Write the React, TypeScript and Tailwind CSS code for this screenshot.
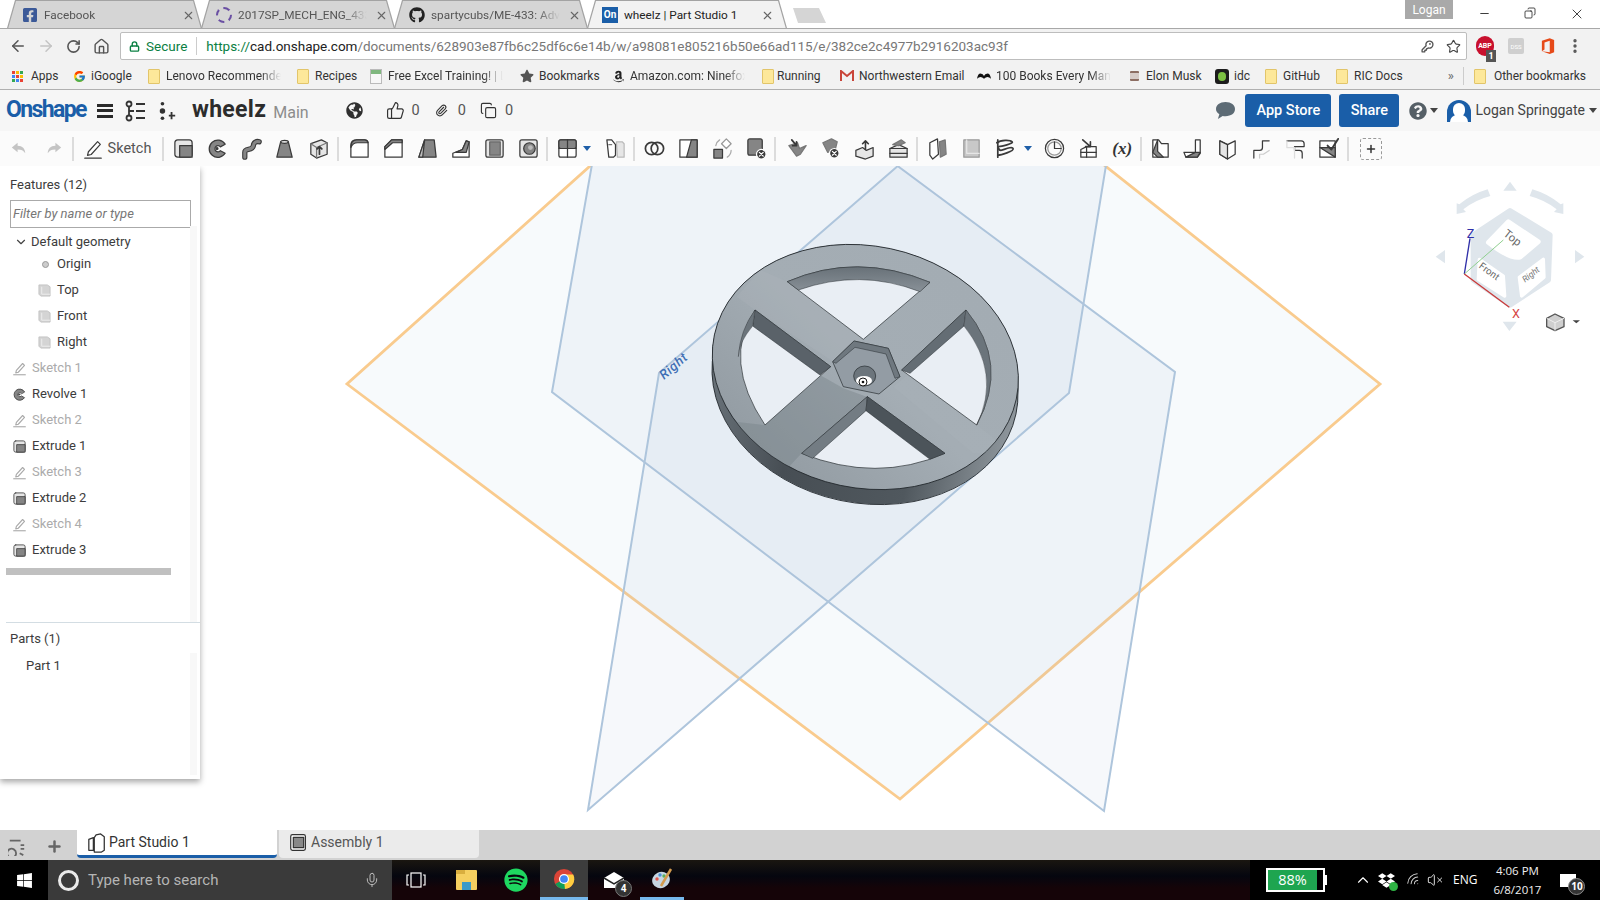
import type { ReactNode } from 'react';
import { ArrowLeft, ArrowRight, RotateCw, Home, Lock, Star, MoreVertical, Minus, X, Copy, ChevronDown, ChevronUp, Mic, ThumbsUp, Paperclip, Plus, Wifi, VolumeX, KeyRound } from 'lucide-react';
import { FaFacebookSquare, FaGithub, FaWindows, FaSpotify, FaGlobeAmericas, FaQuestionCircle, FaDropbox, FaStar, FaAmazon } from 'react-icons/fa';
import { FcGoogle } from 'react-icons/fc';

const chromeFont = "font-['Roboto','Liberation_Sans',sans-serif]";
const fade = '[mask-image:linear-gradient(to_right,black_82%,transparent)]';

const D = '#3a3a3a';
const G = '#858585';
const L = '#e6e6e6';

function Ico({ children, size = 24, className = '' }: { children: ReactNode; size?: number; className?: string }) {
    return (
        <svg viewBox="0 0 24 24" width={size} height={size} fill="none" stroke={D} strokeWidth={1.3} strokeLinejoin="round" strokeLinecap="round" className={className}>
            {children}
        </svg>
    );
}

// Onshape toolbar glyphs, drawn by eye from the reference
const glyphs: Record<string, ReactNode> = {
    undo: <path d="M10 6 4 11l6 5v-3c4 0 6 1 8 4 0-5-3-8-8-8z" fill="#c4c4c4" stroke="none" />,
    redo: <path d="M14 6l6 5-6 5v-3c-4 0-6 1-8 4 0-5 3-8 8-8z" fill="#c4c4c4" stroke="none" />,
    extrude: <><rect x="3" y="3" width="18" height="18" rx="3" fill={L} /><rect x="8" y="9" width="13" height="12" fill={G} /></>,
    revolve: <><path d="M20 7.5A9 9 0 1 0 20 17l-5-2.7a3.2 3.2 0 1 1 0-4z" fill={G} /><circle cx="11.5" cy="12" r="1" fill={D} /></>,
    sweep: <><path d="M5 21v-5c0-5 8-1 9-7 0-3 3-5 6-4" stroke={D} strokeWidth="5.5" /><path d="M5 21v-5c0-5 8-1 9-7 0-3 3-5 6-4" stroke={G} strokeWidth="3.2" /></>,
    loft: <><path d="M8 5 4 21h16L16 5z" fill={G} /><ellipse cx="12" cy="5" rx="4" ry="1.6" fill={L} /></>,
    thicken: <><path d="M4 7l11-4 6 3v12l-11 4-6-4z" fill={L} /><path d="M10 22V11l11-5M4 7l6 4" stroke="#777" /><path d="M13 18v-8m-2.500 2.500L13 10l2.500 2.500" strokeWidth="1.800" /></>,
    fillet: <><path d="M3 21V9q0-6 6-6h8q4 0 4 4v14z" fill="#fff" /><path d="M3 11q0-8 6-8h8q3 0 4 3H10q-5 0-7 5z" fill={G} /></>,
    chamfer: <><path d="M3 21V10l7-7h11v18z" fill="#fff" /><path d="M3 13v-3l7-7h11v3H11z" fill={G} /></>,
    draft: <><path d="M9 3h10l2 18H3z" fill={G} /><path d="M9 3 3 21h4z" fill="#bdbdbd" /></>,
    rib: <><path d="M4 21v-4l10-4 4-9 3 1v16z" fill="#fff" /><path d="M14 13l4-9 3 1-3 11H7z" fill={G} /></>,
    shell: <><rect x="3" y="3" width="18" height="18" rx="2" fill={L} /><rect x="7" y="5" width="11" height="14" fill={G} stroke="#666" /></>,
    hole: <><rect x="3" y="3" width="18" height="18" rx="2" fill={L} /><circle cx="13" cy="12" r="6" fill={G} /><circle cx="14" cy="11" r="2.500" fill="#bbb" stroke="none" /></>,
    pattern: <><rect x="3" y="3" width="18" height="18" rx="2" fill="#fff" /><rect x="3" y="3" width="18" height="9" rx="2" fill={G} /><path d="M12 3v18M3 12h18" /></>,
    mirror: <><path d="M13 5h6l2 2v14h-7z" fill={L} stroke="#bbb" /><path d="M3 3h5l4 5v11l-2 2H5z" fill="#fff" /><path d="M5 8h3" stroke="#777" /></>,
    boolean: <><circle cx="9" cy="12" r="6.500" strokeWidth="1.800" /><circle cx="15" cy="12" r="6.500" strokeWidth="1.800" /></>,
    split: <><path d="M3 3h18v18H3z" fill="#fff" /><path d="M15 3h6v18h-11z" fill={G} /></>,
    transform: <><rect x="3" y="13" width="9" height="9" fill={G} /><path d="M16 2l5 5-5 5-5-5z" fill="#fff" stroke="#999" /><path d="M5 9a9 9 0 0 1 4-6M21 14a9 9 0 0 1-4 7" stroke="#aaa" /></>,
    del: <><rect x="3" y="2" width="15" height="17" rx="2" fill={G} /><circle cx="17" cy="18" r="5" fill={D} stroke="#fff" /><path d="M15 16l4 4m0-4-4 4" stroke="#fff" /></>,
    mod1: <><path d="M3 9l8 11 4-2 6-9-7 3-2-6z" fill={G} stroke="#777" /><path d="M6 3l5 6m0 0V5m0 4H7" strokeWidth="1.800" /></>,
    mod2: <><path d="M4 6l9-4 6 3-2 8-8 3z" fill={G} stroke="#777" /><circle cx="16" cy="17" r="5" fill={D} stroke="#fff" /><path d="M14 15l4 4m0-4-4 4" stroke="#fff" /></>,
    mod3: <><path d="M3 14l7-3 4 3 7-3v9l-8 3-10-3z" fill={L} /><path d="M13 13V4m-3 3 3-3 3 3" strokeWidth="1.700" /></>,
    mod4: <><path d="M3 12l9-4 9 4v9H3z" fill={L} /><path d="M3 12h18M3 17h18" /><path d="M6 8l9-5 4 3-7 3z" fill={G} stroke="#777" /></>,
    plane1: <><path d="M4 6l8-4 1 16-6 5-3-4z" fill="#fff" /><path d="M14 5l6-2 1 15-6 3z" fill={G} stroke="#777" /></>,
    plane2: <><path d="M4 3h16v18H4z" fill="#c8c8c8" stroke="#999" /><path d="M7 3v14h13" stroke="#e6e6e6" /></>,
    helix: <><path d="M4 6c4-3 14-3 16-1S8 10 6 10s0 4 2 4 12-5 13-2-13 7-16 7" strokeWidth="1.800" /><path d="M5 3v18" strokeWidth="1.800" /></>,
    clock: <><circle cx="12" cy="12" r="9.500" /><circle cx="12" cy="12" r="7" stroke="#999" /><path d="M12 5v7h7" /></>,
    importer: <><path d="M4 13l6-3h10v11H4z" fill="#fff" /><path d="M10 10v11M4 16h16" /><path d="M6 3l8 7m0-5v5H9" strokeWidth="1.700" /></>,
    sm1: <><path d="M4 3h6l3 4h7v14H4z" fill="#fff" /><path d="M9 3v12l6 6H9l-5-5z" fill={G} /></>,
    sm2: <><path d="M14 3h5v14l-3 4H4l-2-5h12z" fill="#fff" /><path d="M14 16h5l-3 5H4z" fill={G} /></>,
    sm3: <><path d="M4 4l8 4 8-4v14l-8 5-8-5z" fill="#fff" /><path d="M12 8v15l-8-5V4z" fill={L} /></>,
    sm4: <><path d="M4 22v-8h6q3 0 3-3V4h7" /><path d="M10 22v-4h4l6-4" stroke="#ccc" /></>,
    sm5: <><path d="M3 4h15q3 0 3 3v3H11v4h5q3 0 3 3v5" /><path d="M3 4v7h8v11" stroke="#ddd" /></>,
    sm6: <><rect x="3" y="4" width="16" height="17" fill="#fff" /><path d="M3 11l16 10V11z" fill={G} /><path d="M11 9l4 4 7-11" strokeWidth="2" /></>,
};

const pencil = (
    <>
        <path d="M7 15 17 4l3 3L10 18l-4 1z" fill="#fff" />
        <path d="M3 22h18" />
    </>
);

function ToolIcon({ name, grey }: { name: string; grey?: boolean }) {
    return (
        <div className={'flex h-8 w-[33.8px] shrink-0 items-center justify-center ' + (grey ? 'opacity-70' : '')}>
            <Ico size={23}>{glyphs[name]}</Ico>
        </div>
    );
}

function Sep() {
    return <div className="mx-[1px] h-6 w-[2px] shrink-0 bg-[#dcdcdc]" />;
}

function Caret({ className = 'border-t-[#1f5fa8]' }: { className?: string }) {
    return <div className={'h-0 w-0 shrink-0 border-x-[4px] border-t-[5px] border-x-transparent ' + className} />;
}

function Folder() {
    return <div className="h-[15px] w-[12px] shrink-0 rounded-[1px] border border-[#e2c56a] bg-[#fde89a]" />;
}

function BrowserTab({ icon, label, active, width }: { icon: ReactNode; label: string; active?: boolean; width: string }) {
    return (
        <div className={'-mr-[1px] h-[28px] shrink-0 bg-[#a3a3a3] [clip-path:polygon(0_100%,8px_0,calc(100%-8px)_0,100%_100%)] ' + width}>
            <div className={'mx-[1px] mt-[1px] flex h-[28px] items-center pl-[14px] [clip-path:polygon(0_100%,8px_0,calc(100%-8px)_0,100%_100%)] ' + (active ? 'bg-[#f2f2f2] pr-[12px]' : 'bg-[#d5d5d5] pr-[6px]')}>
                <div className="flex w-[22px] shrink-0 items-center">{icon}</div>
                <span className={'min-w-0 flex-1 overflow-hidden whitespace-nowrap text-[11.800px] leading-[16px] ' + (active ? 'text-[#222]' : 'text-[#555] ' + fade)}>{label}</span>
                <X size={13} strokeWidth={2} className="ml-2 shrink-0 text-[#666]" />
            </div>
        </div>
    );
}

const bookmarks: { icon: ReactNode; label: string; w: string; faded?: boolean; gap?: string }[] = [
    { icon: <div className="grid h-[11px] w-[11px] grid-cols-3 gap-[1px]"><i className="bg-[#ea4335]" /><i className="bg-[#fbbc05]" /><i className="bg-[#34a853]" /><i className="bg-[#4285f4]" /><i className="bg-[#ea4335]" /><i className="bg-[#fbbc05]" /><i className="bg-[#34a853]" /><i className="bg-[#4285f4]" /><i className="bg-[#ea4335]" /></div>, label: 'Apps', w: 'w-[62px]', gap: 'ml-[7px]' },
    { icon: <FcGoogle size={13} />, label: 'iGoogle', w: 'w-[75px]' },
    { icon: <Folder />, label: 'Lenovo Recommended', w: 'w-[149px]', faded: true },
    { icon: <Folder />, label: 'Recipes', w: 'w-[73px]' },
    { icon: <div className="h-[15px] w-[12px] border border-[#bbb] bg-[#f7f7f7]"><div className="h-[4px] bg-[#7fb77e]" /></div>, label: 'Free Excel Training! | Learn', w: 'w-[151px]', faded: true },
    { icon: <FaStar size={14} className="text-[#555]" />, label: 'Bookmarks', w: 'w-[91px]' },
    { icon: <FaAmazon size={13} className="text-[#222]" />, label: 'Amazon.com: Ninefox', w: 'w-[150px]', faded: true },
    { icon: <Folder />, label: 'Running', w: 'w-[79px]', gap: 'ml-[2px]' },
    { icon: <svg viewBox="0 0 14 12" width="14" height="12"><path d="M1 11V1l6 5 6-5v10" fill="none" stroke="#c9453a" strokeWidth="2" /></svg>, label: 'Northwestern Email', w: 'w-[137px]' },
    { icon: <svg viewBox="0 0 16 8" width="15" height="8"><path d="M0 7Q1 1 4 1t4 3q1-3 4-3t4 6q-2-2-4-2T8 7Q6 5 4 5T0 7z" fill="#111" /></svg>, label: '100 Books Every Man', w: 'w-[150px]', faded: true },
    { icon: <div className="h-[10px] w-[9px] rounded-[1px] border-y-2 border-[#8d6e63] bg-[#d7ccc8]" />, label: 'Elon Musk', w: 'w-[88px]' },
    { icon: <div className="flex h-[15px] w-[14px] items-center justify-center rounded-[3px] bg-[#1c1c1c]"><div className="h-[9px] w-[8px] rounded-full bg-[#7cc142]" /></div>, label: 'idc', w: 'w-[49px]' },
    { icon: <Folder />, label: 'GitHub', w: 'w-[71px]' },
    { icon: <Folder />, label: 'RIC Docs', w: 'w-[93px]' },
];

const toolbarGroups = [
    { cls: 'ml-[2px]', items: ['extrude', 'revolve', 'sweep', 'loft', 'thicken'] },
    { cls: 'ml-[3px]', items: ['fillet', 'chamfer', 'draft', 'rib', 'shell', 'hole'] },
];

function Toolbar() {
    return (
        <div className="flex h-[35px] shrink-0 items-center bg-[#fbfbfb] pl-[3px]">
            <ToolIcon name="undo" />
            <ToolIcon name="redo" />
            <Sep />
            <div className="flex w-[86px] shrink-0 items-center pl-[7px]">
                <Ico size={22}>{pencil}</Ico>
                <span className="ml-[4px] font-['Roboto',sans-serif] text-[14.500px] text-[#555]">Sketch</span>
            </div>
            <Sep />
            {toolbarGroups.map((g, i) => (
                <div key={i} className={'flex shrink-0 items-center ' + g.cls}>
                    {g.items.map((n) => <ToolIcon key={n} name={n} />)}
                    <Sep />
                </div>
            ))}
            <div className="ml-[1px] flex shrink-0 items-center">
                <ToolIcon name="pattern" />
                <div className="-ml-[1px] mr-[6px] w-[9px]"><Caret /></div>
                <ToolIcon name="mirror" />
                <Sep />
            </div>
            <div className="ml-[2px] flex shrink-0 items-center">
                {['boolean', 'split', 'transform', 'del'].map((n) => <ToolIcon key={n} name={n} />)}
                <Sep />
            </div>
            <div className="ml-[3px] flex shrink-0 items-center">
                {['mod1', 'mod2', 'mod3', 'mod4'].map((n) => <ToolIcon key={n} name={n} />)}
                <Sep />
            </div>
            <div className="ml-[1px] flex shrink-0 items-center">
                <ToolIcon name="plane1" />
                <ToolIcon name="plane2" />
                <ToolIcon name="helix" />
                <div className="ml-[2px] mr-[5px] w-[9px]"><Caret /></div>
                <ToolIcon name="clock" />
                <ToolIcon name="importer" />
                <div className="flex w-[33.800px] shrink-0 justify-center font-['Liberation_Serif',serif] text-[17px] font-bold italic text-[#333]">(x)</div>
                <Sep />
            </div>
            <div className="flex shrink-0 items-center">
                {['sm1', 'sm2', 'sm3', 'sm4', 'sm5', 'sm6'].map((n) => <ToolIcon key={n} name={n} />)}
                <Sep />
            </div>
            <div className="relative ml-[10px] flex h-[22px] w-[22px] items-center justify-center rounded-[3px] border border-dashed border-[#999]">
                <Plus size={12} strokeWidth={3} className="text-[#333]" />
            </div>
        </div>
    );
}

function Wheel() {
    const hull = Array.from({ length: 23 }, (_, i) => i * 2);
    return (
        <g transform="translate(680 220) scale(0.33333)">
            {hull.map((d) => (
                <ellipse key={d} cx={556 - d * 0.02} cy={441 + d} rx="463" ry="363" transform={`rotate(12 ${556 - d * 0.02} ${441 + d})`} fill="url(#wheelSide)" />
            ))}
            <ellipse cx="555" cy="486" rx="463" ry="363" transform="rotate(12 555 486)" fill="none" stroke="#23282c" strokeWidth="2.500" />
            <ellipse cx="556" cy="441" rx="463" ry="363" transform="rotate(12 556 441)" fill="url(#wheelTop)" stroke="#23282c" strokeWidth="2.500" />
            <g clipPath="url(#wheelClip)">
                <path d="M255 615 420 465 490 505 560 530 365 700 270 800 120 600z" fill="#6f7a82" opacity="0.35" />
                <path d="M690 460 890 615 1000 700 880 700 640 500z" fill="#b1bac0" opacity="0.2" />
                <path d="M322 185 550 358 460 425 225 270 170 230 240 150z" fill="#b5bdc3" opacity="0.18" />
            </g>

            {/* top opening */}
            <path d="M322 185Q530 95 750 187L550 358z" fill="#e9eef4" stroke="#23282c" strokeWidth="2" />
            <path d="M322 185Q530 95 750 187L720 215Q540 145 355 210z" fill="url(#wallTop)" stroke="#23282c" strokeWidth="1.500" />
            {/* right opening */}
            <path d="M858 270Q990 430 890 615L665 450z" fill="#e9eef4" stroke="#23282c" strokeWidth="2" />
            <path d="M858 270 665 450 690 460 852 318z" fill="#646d74" stroke="#23282c" strokeWidth="1.500" />
            <path d="M858 270Q990 430 890 615Q965 460 852 318z" fill="#6b747b" stroke="#23282c" strokeWidth="1" />
            {/* bottom opening */}
            <path d="M562 530 365 700Q590 790 795 700z" fill="#e9eef4" stroke="#23282c" strokeWidth="2" />
            <path d="M562 530 365 700 398 715 558 572z" fill="#737c83" stroke="#23282c" strokeWidth="1.500" />
            <path d="M562 530 795 700 750 718 558 572z" fill="#4c545a" stroke="#23282c" strokeWidth="1.500" />
            {/* left opening */}
            <path d="M225 270Q125 420 255 615L452 440z" fill="#e9eef4" stroke="#23282c" strokeWidth="2" />
            <path d="M225 270 452 440 420 465 218 318z" fill="#5a6269" stroke="#23282c" strokeWidth="1.500" />
            <path d="M225 270 218 318Q175 370 175 410Q180 330 225 270z" fill="#6b747b" stroke="#23282c" strokeWidth="1" />

            {/* hex pocket */}
            <path d="M522 363 625 385 660 470 597 522 490 500 458 425z" fill="#939ca4" stroke="#23282c" strokeWidth="2" />
            <path d="M522 363 625 385 660 470 645 475 618 402 525 382 468 430 458 425z" fill="#6f787f" stroke="#23282c" strokeWidth="1.500" />
            <ellipse cx="554" cy="468" rx="33" ry="30" fill="#6c757c" stroke="#23282c" strokeWidth="2" />
            <ellipse cx="552" cy="482" rx="24" ry="14" fill="#ffffff" />
            <circle cx="549" cy="486" r="12" fill="#fff" stroke="#111" strokeWidth="3" />
            <circle cx="549" cy="486" r="4" fill="#111" />
        </g>
    );
}

function Viewport() {
    return (
        <svg viewBox="0 166 1600 664" className="block h-full w-full">
            <defs>
                <linearGradient id="wheelSide" x1="0" y1="0" x2="1" y2="0">
                    <stop offset="0" stopColor="#6a737a" />
                    <stop offset="0.3" stopColor="#474e54" />
                    <stop offset="0.7" stopColor="#50585e" />
                    <stop offset="1" stopColor="#8e969c" />
                </linearGradient>
                <linearGradient id="wheelTop" x1="0.8" y1="0.1" x2="0.2" y2="0.9">
                    <stop offset="0" stopColor="#a3acb3" />
                    <stop offset="0.5" stopColor="#a4adb4" />
                    <stop offset="1" stopColor="#949da4" />
                </linearGradient>
                <linearGradient id="wallTop" x1="0" y1="0" x2="0" y2="1">
                    <stop offset="0" stopColor="#687178" />
                    <stop offset="1" stopColor="#899198" />
                </linearGradient>
                <clipPath id="wheelClip">
                    <ellipse cx="556" cy="441" rx="463" ry="363" transform="rotate(12 556 441)" />
                </clipPath>
            </defs>
            <polygon points="832,-51 347,384 900,799 1380,384" fill="#a9c3dd" fillOpacity="0.09" stroke="#f9cb8e" strokeWidth="2.800" />
            <polygon points="627,-35 552,392 1104,811 1175,372" fill="#a9bfd8" fillOpacity="0.11" stroke="#aec5dc" strokeWidth="2" />
            <polygon points="1140,-44 659,373 588,810 1069,393" fill="#a9bfd8" fillOpacity="0.11" stroke="#aec5dc" strokeWidth="2" />
            <text x="664" y="380" transform="rotate(-41 664 380)" fontFamily="Roboto, sans-serif" fontStyle="italic" fontSize="13" fontWeight="500" letterSpacing="0.6" fill="#3f6fb5">Right</text>
            <Wheel />
        </svg>
    );
}

function ViewCube() {
    const arrow = '#dfe6ec';
    return (
        <svg viewBox="0 0 540 540" width="180" height="180">
            <path d="M270 35 250 62h40zM47 260l28-20v40zM493 260l-28-20v40zM268 483l-20-28h42z" fill={arrow} />
            <path d="M110 132V100l8 3Q155 72 203 58l8 20Q165 90 130 118l8 8z" fill={arrow} />
            <path d="M430 132V100l-8 3Q385 72 337 58l-8 20Q375 90 410 118l-8 8z" fill={arrow} />
            <path d="M270 122 390 195l-5 135-115 75-110-75v-135z" fill={arrow} stroke={arrow} strokeWidth="16" strokeLinejoin="round" />
            <path d="M265 155 355 215 300 262Q270 268 205 217z" fill="#fff" stroke="#fff" strokeWidth="14" strokeLinejoin="round" />
            <path d="M178 268 250 318 254 378 175 328z" fill="#fff" stroke="#fff" strokeWidth="10" strokeLinejoin="round" />
            <path d="M370 268 372 322 305 378 298 322z" fill="#fff" stroke="#fff" strokeWidth="10" strokeLinejoin="round" />
            <text x="248" y="195" transform="rotate(38 248 195)" fontFamily="Roboto, sans-serif" fontSize="34" fill="#666">Top</text>
            <text x="175" y="292" transform="rotate(36 175 292)" fontFamily="Roboto, sans-serif" fontSize="29" fill="#666">Front</text>
            <text x="315" y="338" transform="rotate(-38 315 338)" fontFamily="Roboto, sans-serif" fontStyle="italic" fontSize="26" fill="#777">Right</text>
            <path d="M133 312 150 205" stroke="#2f2fa8" strokeWidth="4" />
            <path d="M133 312 250 210" stroke="#8fcf8f" strokeWidth="3" />
            <path d="M133 312 268 412" stroke="#c93a3a" strokeWidth="4" />
            <text x="140" y="205" fontFamily="Roboto, sans-serif" fontSize="38" fill="#2f2fa8">Z</text>
            <text x="276" y="445" fontFamily="Roboto, sans-serif" fontSize="38" fill="#d64545">X</text>
            <path d="M380 445 405 432 432 445V470L405 482 380 470z" fill="#cfcfcf" stroke="#555" strokeWidth="4" strokeLinejoin="round" />
            <path d="M380 445 405 458 432 445M405 458V482" fill="none" stroke="#eee" strokeWidth="3" />
            <path d="M458 451H480L469 460z" fill="#444" />
        </svg>
    );
}

const planeIcon = (
    <svg viewBox="0 0 14 14" width="13" height="13"><path d="M1 1h9l3 2v10H3l-2-2z" fill="#d4d4d4" stroke="#c2c2c2" /><path d="M4 3v8h9" fill="none" stroke="#eee" /></svg>
);

function FeatureRow({ icon, label, sketch }: { icon: ReactNode; label: string; sketch?: boolean }) {
    return (
        <div className="flex h-[26px] items-center pl-[12px]">
            <div className="flex w-[20px] shrink-0 items-center">{icon}</div>
            <span className={'text-[13px] ' + (sketch ? 'text-[#ababab]' : 'text-[#3c3c3c]')}>{label}</span>
        </div>
    );
}

function GeoRow({ icon, label }: { icon: ReactNode; label: string }) {
    return (
        <div className="flex h-[26px] items-center pl-[38px]">
            <div className="flex w-[19px] shrink-0 items-center">{icon}</div>
            <span className="text-[13px] text-[#3c3c3c]">{label}</span>
        </div>
    );
}

const sketchIcon = (
    <svg viewBox="0 0 24 24" width="15" height="15" fill="none" stroke="#aaa" strokeWidth="1.800" strokeLinejoin="round"><path d="M7 15 17 4l3 3L10 18l-4 1z" /><path d="M2 22h20" /></svg>
);
const extrudeIcon = <Ico size={15}>{glyphs.extrude}</Ico>;
const revolveIcon = <Ico size={15}>{glyphs.revolve}</Ico>;

function FeaturePanel() {
    return (
        <div className="absolute left-0 top-0 flex h-[613px] w-[200px] flex-col bg-white font-['Roboto',sans-serif] shadow-[0_3px_6px_rgba(0,0,0,0.35)]">
            <div className="relative h-[456px] shrink-0 pl-[10px] pt-[9px]">
                <div className="text-[13px] leading-[20px] text-[#3c3c3c]">Features (12)</div>
                <div className="mt-[5px] flex h-[28px] w-[181px] items-center border border-[#aaa] pl-[2px] text-[13px] italic text-[#777]">Filter by name or type</div>
                <div className="absolute right-[3px] top-[60px] bottom-0 w-[7px] bg-[#f8f8f8]" />
                <div className="relative -ml-[10px] mt-[1px]">
                    <div className="flex h-[26px] items-center pl-[14px]">
                        <ChevronDown size={14} strokeWidth={2} className="mr-[2px] text-[#444]" />
                        <span className="ml-[1px] text-[13px] text-[#3c3c3c]">Default geometry</span>
                    </div>
                    <div className="-mt-[2px] mb-[2px] flex h-[22px] items-center pl-[42px]">
                        <div className="mr-[10px] h-[7px] w-[7px] rounded-full border border-[#999] bg-[#ccc]" />
                        <span className="ml-[-2px] text-[13px] text-[#3c3c3c]">Origin</span>
                    </div>
                    <GeoRow icon={planeIcon} label="Top" />
                    <GeoRow icon={planeIcon} label="Front" />
                    <GeoRow icon={planeIcon} label="Right" />
                    <FeatureRow icon={sketchIcon} label="Sketch 1" sketch />
                    <FeatureRow icon={revolveIcon} label="Revolve 1" />
                    <FeatureRow icon={sketchIcon} label="Sketch 2" sketch />
                    <FeatureRow icon={extrudeIcon} label="Extrude 1" />
                    <FeatureRow icon={sketchIcon} label="Sketch 3" sketch />
                    <FeatureRow icon={extrudeIcon} label="Extrude 2" />
                    <FeatureRow icon={sketchIcon} label="Sketch 4" sketch />
                    <FeatureRow icon={extrudeIcon} label="Extrude 3" />
                    <div className="ml-[6px] mt-[5px] h-[7px] w-[165px] bg-[#c0c0c0]" />
                </div>
            </div>
            <div className="ml-[6px] h-px shrink-0 bg-[#d3dde3]" />
            <div className="relative flex-1 pl-[10px] pt-[6px]">
                <div className="absolute right-[3px] top-[30px] bottom-[4px] w-[7px] bg-[#f8f8f8]" />
                <div className="text-[13px] leading-[20px] text-[#3c3c3c]">Parts (1)</div>
                <div className="mt-[7px] pl-[16px] text-[13px] leading-[20px] text-[#3c3c3c]">Part 1</div>
            </div>
        </div>
    );
}

function ChromeLogo() {
    return (
        <svg viewBox="0 0 24 24" width="22" height="22">
            <circle cx="12" cy="12" r="11" fill="#db4437" />
            <path d="M12 12 2.500 17.500A11 11 0 0 0 15 22.600z" fill="#0f9d58" />
            <path d="M12 7h10a11 11 0 0 1-9 16l-1-11z" fill="#ffcd40" />
            <circle cx="12" cy="12" r="5.500" fill="#fff" />
            <circle cx="12" cy="12" r="4.200" fill="#4285f4" />
        </svg>
    );
}

export default function App() {
    return (
        <div className={'flex h-[900px] w-[1600px] flex-col overflow-hidden bg-white ' + chromeFont}>
            {/* chrome tab strip */}
            <div className="relative flex h-[29px] shrink-0 items-start border-b border-[#a8a8a8] bg-white pl-[7px]">
                <BrowserTab width="w-[195px]" label="Facebook" icon={<FaFacebookSquare size={16} className="text-[#3b5998]" />} />
                <BrowserTab width="w-[194px]" label="2017SP_MECH_ENG_433-0_SEC20" icon={<div className="h-[16px] w-[16px] rounded-full border-[2px] border-dashed border-[#6a4fa3]" />} />
                <BrowserTab width="w-[194px]" label="spartycubs/ME-433: Advanced" icon={<FaGithub size={16} className="text-[#222]" />} />
                <BrowserTab active width="w-[200px]" label="wheelz | Part Studio 1" icon={<div className="flex h-[16px] w-[16px] items-center justify-center bg-[#1a5ea8] text-[10px] font-bold leading-none text-white">On</div>} />
                <div className="ml-[7px] mt-[8px] h-[15px] w-[33px] bg-[#d5d5d5] [clip-path:polygon(5px_100%,0_0,calc(100%-7px)_0,100%_100%)]" />
                <div className="ml-auto flex items-start">
                    <div className="mr-[8px] flex h-[19px] w-[48px] items-center justify-center bg-[#a9a9a9] text-[12px] text-white">Logan</div>
                    <div className="flex w-[46px] justify-center pt-[7px]"><Minus size={13} strokeWidth={1.500} className="text-[#111]" /></div>
                    <div className="flex w-[46px] justify-center pt-[7px]"><Copy size={12} strokeWidth={1.500} className="-scale-x-100 text-[#111]" /></div>
                    <div className="flex w-[47px] justify-center pt-[6px]"><X size={16} strokeWidth={1.200} className="text-[#111]" /></div>
                </div>
            </div>

            {/* address bar */}
            <div className="flex h-[34px] shrink-0 items-center bg-[#f2f2f2] pl-[9px]">
                <ArrowLeft size={18} strokeWidth={2} className="text-[#555]" />
                <ArrowRight size={18} strokeWidth={2} className="ml-[10px] text-[#c4c4c4]" />
                <RotateCw size={15} strokeWidth={2.500} className="ml-[11px] text-[#555]" />
                <Home size={17} strokeWidth={2} className="ml-[12px] text-[#555]" />
                <div className="ml-[10px] flex h-[28px] w-[1347px] shrink-0 items-center rounded-[2px] border border-[#bdbdbd] bg-white pl-[8px] pr-[3px]">
                    <Lock size={11} strokeWidth={3} className="text-[#0b8043]" />
                    <span className="ml-[6px] text-[13.500px] text-[#0b8043]">Secure</span>
                    <div className="ml-[9px] h-[18px] w-px bg-[#ccc]" />
                    <div className="ml-[9px] text-[13.500px] text-[#777]"><span className="text-[#0b8043]">https://</span><span className="text-[#222]">cad.onshape.com</span>/documents/628903e87fb6c25df6c6e14b/w/a98081e805216b50e66ad115/e/382ce2c4977b2916203ac93f</div>
                    <KeyRound size={13} strokeWidth={2.500} className="ml-auto mr-[12px] text-[#555]" />
                    <Star size={15} strokeWidth={1.800} className="mr-[2px] text-[#444]" />
                </div>
                <div className="relative ml-[9px] h-[20px] w-[18px] rounded-full bg-[#c8102e] text-center text-[7px] font-bold leading-[20px] text-white">
                    ABP
                    <div className="absolute -bottom-[6px] left-[10px] h-[12px] w-[10px] bg-[#555] text-[9px] leading-[12px]">1</div>
                </div>
                <div className="ml-[14px] flex h-[16px] w-[16px] items-center justify-center rounded-[2px] bg-[#cfcfcf] text-[6px] text-white">DSS</div>
                <svg viewBox="0 0 16 20" width="14" height="20" className="ml-[17px]"><path d="M1 4 10 1l5 2v14l-5 2-9-3 9 1V4L4 6v8l-3 2z" fill="#e64a19" /></svg>
                <MoreVertical size={18} strokeWidth={2.500} className="ml-[11px] text-[#555]" />
            </div>

            {/* bookmarks */}
            <div className="flex h-[27px] shrink-0 items-center border-b border-[#b0b0b0] bg-[#f2f2f2] pl-[10px] text-[12px] text-[#333]">
                {bookmarks.map((b) => (
                    <div key={b.label} className={'flex shrink-0 items-center overflow-hidden ' + b.w}>
                        <div className="flex w-[14px] shrink-0 justify-center">{b.icon}</div>
                        <span className={(b.gap ?? 'ml-[5px]') + ' whitespace-nowrap ' + (b.faded ? 'max-w-[115px] overflow-hidden ' + fade : '')}>{b.label}</span>
                    </div>
                ))}
                <div className="ml-auto flex items-center pr-[14px]">
                    <span className="mr-[9px] text-[13px] text-[#666]">»</span>
                    <div className="mr-[10px] h-[18px] w-px bg-[#ccc]" />
                    <Folder />
                    <span className="ml-[8px]">Other bookmarks</span>
                </div>
            </div>

            {/* onshape header */}
            <div className="flex h-[41px] shrink-0 items-center bg-[#f6f6f6] pl-[6px] font-['Roboto',sans-serif]">
                <span className="w-[79px] text-[23px] font-bold tracking-[-1.600px] text-[#1a5ea8]">Onshape</span>
                <div className="ml-[12px] flex h-[14px] w-[16px] flex-col justify-between"><i className="h-[3px] bg-[#2a2a2a]" /><i className="h-[3px] bg-[#2a2a2a]" /><i className="h-[3px] bg-[#2a2a2a]" /></div>
                <svg viewBox="0 0 22 22" width="22" height="22" fill="none" stroke="#333" strokeWidth="1.800" className="ml-[11px]"><circle cx="5" cy="4" r="2.500" /><circle cx="5" cy="18" r="2.500" /><path d="M5 7v8M5 11h5M12 4h9M12 11h9M12 18h9" /></svg>
                <svg viewBox="0 0 22 22" width="20" height="22" fill="#333" className="ml-[11px]"><circle cx="6" cy="3" r="2" /><circle cx="6" cy="11" r="3" /><circle cx="6" cy="19" r="2" /><path d="M13 15h2v-3h2v3h3v2h-3v3h-2v-3h-2z" /></svg>
                <span className="ml-[15px] text-[23px] font-bold tracking-[0.3px] text-[#2c2c2c]">wheelz</span>
                <span className="ml-[7px] mt-[4px] text-[16px] text-[#8c8c8c]">Main</span>
                <FaGlobeAmericas size={17} className="ml-[37px] text-[#2f2f2f]" />
                <ThumbsUp size={19} strokeWidth={1.500} className="ml-[23px] text-[#333]" />
                <span className="ml-[7px] text-[14.500px] text-[#555]">0</span>
                <Paperclip size={13} strokeWidth={2} className="ml-[15px] text-[#333]" />
                <span className="ml-[10px] text-[14.500px] text-[#555]">0</span>
                <Copy size={17} strokeWidth={1.600} className="ml-[14px] text-[#333]" />
                <span className="ml-[8px] text-[14.500px] text-[#555]">0</span>
                <div className="ml-auto flex items-center">
                    <svg viewBox="0 0 22 20" width="21" height="19"><path d="M11 1c6 0 10 3 10 7.500S17 16 11 16c-1 0-2 0-3-.3L3 19l1.500-5C2 12.500 1 10.500 1 8.500 1 4 5 1 11 1z" fill="#5d6b75" /></svg>
                    <div className="ml-[9px] flex h-[33px] w-[86px] items-center justify-center rounded-[3px] bg-[#1a5ea8] text-[14.500px] font-medium text-white">App Store</div>
                    <div className="ml-[8px] flex h-[33px] w-[60px] items-center justify-center rounded-[3px] bg-[#1a5ea8] text-[14.500px] font-medium text-white">Share</div>
                    <FaQuestionCircle size={18} className="ml-[10px] text-[#555f66]" />
                    <div className="ml-[3px]"><Caret className="border-t-[#444]" /></div>
                    <div className="relative ml-[9px] h-[22px] w-[24px] overflow-hidden rounded-t-full bg-[#1a5ea8]">
                        <div className="absolute left-[6px] top-[3px] h-[14px] w-[12px] rounded-full bg-white" />
                        <div className="absolute bottom-0 left-[3px] h-[7px] w-[18px] rounded-t-full bg-white" />
                    </div>
                    <span className="ml-[4px] text-[14px] text-[#444]">Logan Springgate</span>
                    <div className="ml-[4px] mr-[3px]"><Caret className="border-t-[#444]" /></div>
                </div>
            </div>

            <Toolbar />

            {/* graphics area */}
            <div className="relative flex-1 overflow-hidden bg-white">
                <Viewport />
                <FeaturePanel />
                <div className="absolute right-0 top-[4px]">
                    <ViewCube />
                </div>
            </div>

            {/* part studio tabs */}
            <div className="flex h-[30px] shrink-0 items-start bg-[#d2d2d2] font-['Roboto',sans-serif]">
                <svg viewBox="0 0 20 20" width="18" height="18" fill="none" stroke="#666" strokeWidth="2" className="ml-[8px] mt-[8px]"><path d="M2 3h12M9 17a5 5 0 1 1 0-.1M13 17l4 2M14 8h4M14 12h4" /></svg>
                <Plus size={17} strokeWidth={3.500} className="ml-[20px] mt-[8px] text-[#666]" />
                <div className="ml-[14px] flex h-[28px] w-[200px] items-center rounded-b-[4px] border-b-[3px] border-[#1a5ea8] bg-white pl-[10px]">
                    <svg viewBox="0 0 22 22" width="20" height="20" fill="#fff" stroke="#333" strokeWidth="1.400" strokeLinejoin="round"><path d="M2 7l5-2v14H2zM8 5l2-3 5-1 4 3v15l-3 2H8z" /></svg>
                    <span className="ml-[2px] text-[14px] text-[#333]">Part Studio 1</span>
                </div>
                <div className="ml-[2px] flex h-[28px] w-[200px] items-center rounded-b-[4px] bg-[#ebebeb] pb-[3px] pl-[10px]">
                    <svg viewBox="0 0 22 22" width="19" height="19" fill="#fff" stroke="#333" strokeWidth="1.400" strokeLinejoin="round"><rect x="2" y="2" width="17" height="18" rx="2" /><rect x="5" y="5" width="12" height="12" fill="#888" /></svg>
                    <span className="ml-[3px] text-[14px] text-[#555]">Assembly 1</span>
                </div>
            </div>

            {/* windows taskbar */}
            <div className="flex h-[40px] shrink-0 items-stretch bg-black text-white">
                <div className="flex w-[48px] shrink-0 items-center justify-center"><FaWindows size={17} /></div>
                <div className="flex w-[344px] shrink-0 items-center bg-[#3a3a3a] pl-[10px]">
                    <div className="h-[21px] w-[21px] rounded-full border-[3px] border-[#eaeaea]" />
                    <span className="ml-[9px] text-[15px] text-[#b5b5b5]">Type here to search</span>
                    <Mic size={16} strokeWidth={1.500} className="ml-auto mr-[12px] text-[#bbb]" />
                </div>
                <div className="flex flex-1 items-stretch bg-[linear-gradient(to_bottom,#1a1610_0%,#05060f_40%,#150408_70%,#150408_100%)]">
                    <div className="flex w-[48px] items-center justify-center"><svg viewBox="0 0 20 16" width="20" height="16" fill="none" stroke="#fff" strokeWidth="1.200"><rect x="5" y="1" width="10" height="14" /><path d="M3 3H1v10h2M17 3h2v10h-2" /></svg></div>
                    <div className="flex w-[52px] items-center justify-center">
                        <div className="relative h-[20px] w-[21px] rounded-[1px] bg-[#f5cf60]"><div className="absolute bottom-0 left-[6px] h-[8px] w-[9px] bg-[#3b9ac9]" /><div className="absolute left-0 top-0 h-[4px] w-[9px] bg-[#d9ae3f]" /></div>
                    </div>
                    <div className="flex w-[48px] items-center justify-center"><FaSpotify size={24} className="text-[#1ed760]" /></div>
                    <div className="flex w-[48px] items-center justify-center border-b-[3px] border-[#76b9ed] bg-[#3d3d3d]"><ChromeLogo /></div>
                    <div className="relative flex w-[52px] items-center justify-center">
                        <svg viewBox="0 0 22 18" width="22" height="18"><path d="M1 7 11 1l10 6v10H1z" fill="#fff" /><path d="M1 7l10 6 10-6" fill="none" stroke="#222" strokeWidth="1.500" /></svg>
                        <div className="absolute bottom-[3px] right-[8px] flex h-[17px] w-[17px] items-center justify-center rounded-full border border-[#777] bg-[#333] text-[10px] font-bold">4</div>
                    </div>
                    <div className="flex w-[44px] items-center justify-center border-b-[3px] border-[#76b9ed]">
                        <svg viewBox="0 0 22 24" width="22" height="24"><ellipse cx="10" cy="13" rx="9" ry="8" transform="rotate(-25 10 13)" fill="#c6d6e2" /><circle cx="6" cy="12" r="1.700" fill="#e2574c" /><circle cx="9" cy="8" r="1.700" fill="#4a90d9" /><circle cx="13" cy="9" r="1.700" fill="#57b05c" /><path d="M10 19 20 2" stroke="#d39b4f" strokeWidth="2.500" /></svg>
                    </div>
                    <div className="flex-1" />
                    <div className="ml-auto flex w-[350px] shrink-0 items-center bg-black font-['Open_Sans',sans-serif]">
                        <div className="ml-[16px] flex items-center">
                            <div className="flex h-[24px] w-[59px] items-center justify-between border-[2px] border-white pr-[6px]">
                                <div className="flex h-full w-[50px] items-center justify-center bg-[#1ea550] text-[14.500px] leading-none">88%</div>
                            </div>
                            <div className="h-[10px] w-[2px] bg-white" />
                        </div>
                        <ChevronUp size={18} strokeWidth={1.500} className="ml-[27px]" />
                        <div className="relative ml-[6px]"><FaDropbox size={17} /><div className="absolute -bottom-[2px] -right-[3px] h-[9px] w-[9px] rounded-full bg-[#2fb344]" /></div>
                        <Wifi size={16} strokeWidth={1.500} className="ml-[11px] -rotate-45 text-[#cfcfcf]" />
                        <VolumeX size={16} strokeWidth={1.500} className="ml-[5px] text-[#ddd]" />
                        <span className="ml-[10px] text-[12px]">ENG</span>
                        <div className="ml-[12px] flex w-[56px] shrink-0 flex-col items-center text-[11.500px] leading-[19px] text-[#f0f0f0]">
                            <span>4:06 PM</span>
                            <span>6/8/2017</span>
                        </div>
                        <div className="relative ml-[15px] h-[13px] w-[16px] bg-white">
                            <div className="absolute -bottom-[8px] -right-[9px] flex h-[17px] w-[17px] items-center justify-center rounded-full border border-[#888] bg-[#333] text-[10px] font-bold">10</div>
                        </div>
                    </div>
                </div>
            </div>
        </div>
    );
}
